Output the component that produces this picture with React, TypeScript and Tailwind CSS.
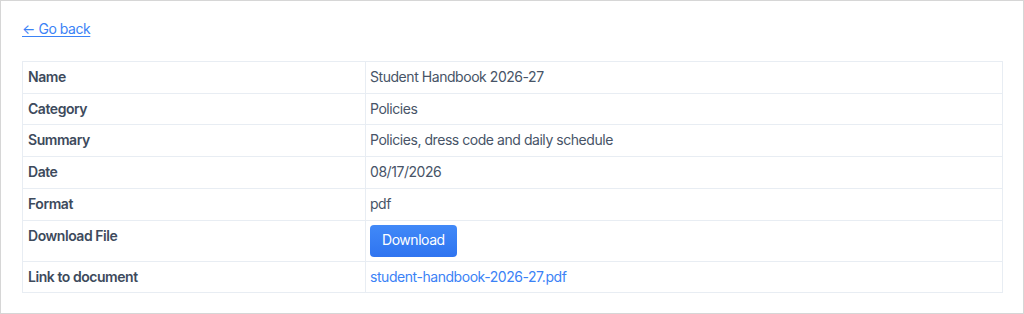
const ROWS: { label: string; value: string; kind?: 'button' | 'link' }[] = [
  { label: 'Name', value: 'Student Handbook 2026-27' },
  { label: 'Category', value: 'Policies' },
  { label: 'Summary', value: 'Policies, dress code and daily schedule' },
  { label: 'Date', value: '08/17/2026' },
  { label: 'Format', value: 'pdf' },
  { label: 'Download File', value: 'Download', kind: 'button' },
  { label: 'Link to document', value: 'student-handbook-2026-27.pdf', kind: 'link' },
];

export default function App() {
  return (
    <div className="h-[314px] w-[1024px] border border-[#d6d6d6] bg-white font-['Inter',sans-serif] text-[14px] tracking-[-0.45px]">
      <div className="px-[21px] pt-[17px]">
        <a href="#" className="text-[#3b82f6] underline underline-offset-2 leading-[20px]">
          ← Go back
        </a>

        {/* Detail table */}
        <table className="mt-[22px] w-[981px] border-collapse">
          <tbody>
            {ROWS.map((row) => (
              <tr key={row.label}>
                <td className="w-[343px] border border-[#e8edf3] px-[5px] py-[4px] align-top font-semibold leading-[22.7px] text-[#3d4a5c]">
                  {row.label}
                </td>
                <td className="border border-[#e8edf3] px-[4px] py-[4px] align-top leading-[22.7px] text-[#475467]">
                  {row.kind === 'button' ? (
                    <button className="h-[32px] rounded-[4px] bg-gradient-to-b from-[#4189f8] to-[#2f74f0] px-[12px] text-white">
                      {row.value}
                    </button>
                  ) : row.kind === 'link' ? (
                    <a href="#" className="text-[#3b82f6]">{row.value}</a>
                  ) : (
                    row.value
                  )}
                </td>
              </tr>
            ))}
          </tbody>
        </table>
      </div>
    </div>
  );
}
